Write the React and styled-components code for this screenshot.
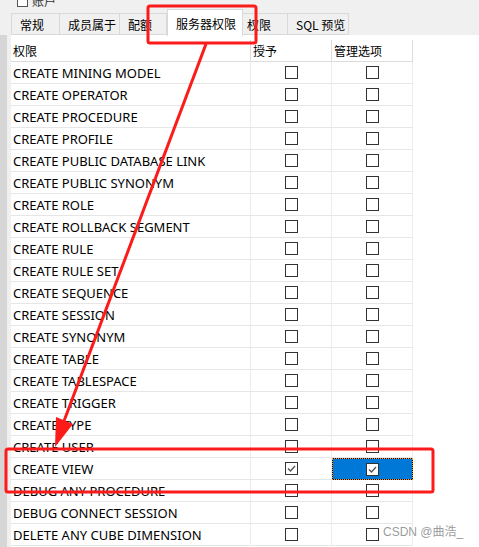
import styled, { createGlobalStyle } from 'styled-components'

const GlobalStyle = createGlobalStyle`
  html, body {
    margin: 0;
    padding: 0;
    background: #f0f0f0;
  }
  body {
    font-family: "Noto Sans", "Noto Sans CJK SC", sans-serif;
  }
`

const Page = styled.div`
  position: relative;
  width: 479px;
  height: 547px;
  overflow: hidden;
  background: #f0f0f0;
`

const TitleBar = styled.div`
  height: 13px;
  display: flex;
  align-items: flex-end;
  padding-left: 17px;
  overflow: hidden;
`

const TitleInner = styled.div`
  display: flex;
  align-items: center;
  gap: 4px;
  margin-bottom: 5px;
  font-size: 12px;
  line-height: 14px;
  color: #333;
  font-family: "Noto Sans CJK SC", sans-serif;
`

const TitleIcon = styled.span`
  width: 9px;
  height: 10px;
  border: 1px solid #555;
  background: #fff;
`

const TabBar = styled.div`
  display: flex;
  align-items: flex-end;
  height: 22px;
  padding-left: 11px;
`

const Tab = styled.div`
  box-sizing: border-box;
  height: ${p => (p.active ? '27px' : '22px')};
  margin-bottom: ${p => (p.active ? '-1px' : '0')};
  width: ${p => p.w}px;
  padding-left: ${p => p.pad || 8}px;
  display: flex;
  align-items: center;
  font-family: "Noto Sans CJK SC", sans-serif;
  font-size: 12px;
  color: #000;
  background: ${p => (p.active ? '#fff' : '#f0f0f0')};
  border: 1px solid #d9d9d9;
  border-bottom: ${p => (p.active ? 'none' : '1px solid #d9d9d9')};
  border-left: ${p => (p.first || p.active ? '1px solid #d9d9d9' : 'none')};
  position: relative;
  z-index: ${p => (p.active ? 1 : 0)};
`

const Body = styled.div`
  display: flex;
  height: 512px;
`

const Strip = styled.div`
  width: 7px;
  background: #d6d6d6;
  margin-right: 4px;
`

const Content = styled.div`
  flex: 1;
  background: #fff;
  padding-top: 5px;
`

const Table = styled.div`
  display: grid;
  grid-template-columns: 240px 81px 81px;
  width: 402px;
`

const Cell = styled.div`
  box-sizing: border-box;
  height: 22px;
  display: flex;
  align-items: center;
  justify-content: ${p => (p.center ? 'center' : 'flex-start')};
  padding-left: ${p => (p.center ? 0 : 2)}px;
  border-right: 1px solid ${p => (p.head ? '#dcdcdc' : '#ececec')};
  border-bottom: 1px solid ${p => (p.head ? '#dcdcdc' : '#e6e6e6')};
  font-size: ${p => (p.head ? 12 : 13)}px;
  font-family: ${p => (p.head ? '"Noto Sans CJK SC", sans-serif' : '"Noto Sans", "Noto Sans CJK SC", sans-serif')};
  color: #000;
  white-space: nowrap;
  background: ${p =>
    p.selected
      ? 'linear-gradient(#0078d7, #0078d7) padding-box, linear-gradient(#000, #000) border-box'
      : 'transparent'};
  ${p => p.selected && `border: 1px dotted #ff9a1f;`}
`

const Box = styled.span`
  box-sizing: border-box;
  width: 13px;
  height: 13px;
  border: 1px solid #333;
  background: #fff;
  display: flex;
  align-items: center;
  justify-content: center;
`

const Watermark = styled.div`
  position: absolute;
  left: 383px;
  top: 522px;
  font-family: "Liberation Sans", "Noto Sans CJK SC", sans-serif;
  font-size: 12px;
  color: rgba(120, 120, 120, 0.75);
`

const Overlay = styled.svg`
  position: absolute;
  left: 0;
  top: 0;
  pointer-events: none;
`

const rows = [
  'CREATE MINING MODEL',
  'CREATE OPERATOR',
  'CREATE PROCEDURE',
  'CREATE PROFILE',
  'CREATE PUBLIC DATABASE LINK',
  'CREATE PUBLIC SYNONYM',
  'CREATE ROLE',
  'CREATE ROLLBACK SEGMENT',
  'CREATE RULE',
  'CREATE RULE SET',
  'CREATE SEQUENCE',
  'CREATE SESSION',
  'CREATE SYNONYM',
  'CREATE TABLE',
  'CREATE TABLESPACE',
  'CREATE TRIGGER',
  'CREATE TYPE',
  'CREATE USER',
  'CREATE VIEW',
  'DEBUG ANY PROCEDURE',
  'DEBUG CONNECT SESSION',
  'DELETE ANY CUBE DIMENSION',
]

const Check = ({ on }) => (
  <Box>
    {on && (
      <svg width="11" height="11" viewBox="0 0 11 11">
        <path d="M2 5.5 L4.5 8 L9 3" fill="none" stroke="#555" strokeWidth="1.4" />
      </svg>
    )}
  </Box>
)

function App() {
  return (
    <Page>
      <GlobalStyle />
      <TitleBar>
        <TitleInner>
          <TitleIcon />
          <span>账户</span>
        </TitleInner>
      </TitleBar>
      <TabBar>
        <Tab first w={49}>常规</Tab>
        <Tab w={60}>成员属于</Tab>
        <Tab w={47}>配额</Tab>
        <Tab active w={76}>服务器权限</Tab>
        <Tab w={45} pad={4}>权限</Tab>
        <Tab w={61}>SQL 预览</Tab>
      </TabBar>
      <Body>
        <Strip />
        <Content>
          <Table>
            <Cell head>权限</Cell>
            <Cell head>授予</Cell>
            <Cell head>管理选项</Cell>
            {rows.map(name => {
              const on = name === 'CREATE VIEW'
              return [
                <Cell key={name + 'n'}>{name}</Cell>,
                <Cell key={name + 'g'} center>
                  <Check on={on} />
                </Cell>,
                <Cell key={name + 'a'} center selected={on}>
                  <Check on={on} />
                </Cell>,
              ]
            })}
          </Table>
        </Content>
      </Body>
      <Watermark>CSDN @曲浩_</Watermark>
      <Overlay width="479" height="547" viewBox="0 0 479 547">
        <rect x="148" y="6" width="108" height="37" rx="2" fill="none" stroke="#fb1b1b" strokeWidth="3" />
        <rect x="6" y="449" width="427" height="43" rx="2" fill="none" stroke="#fb1b1b" strokeWidth="3" />
        <line x1="206" y1="44" x2="64" y2="421" stroke="#fb1b1b" strokeWidth="3" />
        <polygon points="55,447 56,417 73,424" fill="#fb1b1b" />
      </Overlay>
    </Page>
  )
}

export default App
